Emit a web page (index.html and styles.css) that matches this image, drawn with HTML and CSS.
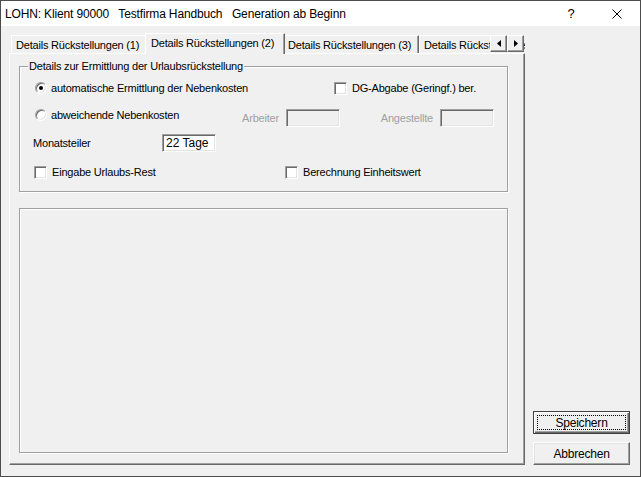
FILE: index.html
```html
<!DOCTYPE html>
<html lang="de">
<head>
<meta charset="utf-8">
<title>LOHN</title>
<link rel="stylesheet" href="styles.css">
</head>
<body>
<div class="window">
  <div class="titlebar">
    <span class="title">LOHN: Klient 90000   Testfirma Handbuch   Generation ab Beginn</span>
    <span class="capbtn help">?</span>
    <span class="capbtn close">
      <svg width="10" height="10" viewBox="0 0 10 10"><path d="M0.5 0.5 L9.5 9.5 M9.5 0.5 L0.5 9.5" stroke="#000" stroke-width="1" fill="none"/></svg>
    </span>
  </div>
  <div class="body">
    <div class="tabctl">
      <div class="tabstrip">
        <div class="tab">Details Rückstellungen (1)</div>
        <div class="tab active">Details Rückstellungen (2)</div>
        <div class="tab">Details Rückstellungen (3)</div>
        <div class="tab">Details Rückstellungen (4)</div>
      </div>
      <div class="scroller">
        <span class="sbtn"><svg width="4" height="7" viewBox="0 0 4 7"><polygon points="4,0 4,7 0,3.5" fill="#000"/></svg></span>
        <span class="sbtn"><svg width="4" height="7" viewBox="0 0 4 7"><polygon points="0,0 0,7 4,3.5" fill="#000"/></svg></span>
      </div>
      <div class="panel">
        <div class="group g1">
          <div class="legend">Details zur Ermittlung der Urlaubsrückstellung</div>
          <div class="row r1">
            <label class="opt w299"><span class="radio checked"></span>automatische Ermittlung der Nebenkosten</label>
            <label class="opt cb"><span class="check"></span>DG-Abgabe (Geringf.) ber.</label>
          </div>
          <div class="row r2">
            <label class="opt w207 up"><span class="radio"></span>abweichende Nebenkosten</label>
            <span class="dis lbl-arb">Arbeiter</span>
            <span class="field disabled f-arb"></span>
            <span class="dis lbl-ang">Angestellte</span>
            <span class="field disabled f-ang"></span>
          </div>
          <div class="row r3">
            <span class="lbl-mon">Monatsteiler</span>
            <span class="field f-mon">22 Tage</span>
          </div>
          <div class="row r4">
            <label class="opt cb w251"><span class="check"></span>Eingabe Urlaubs-Rest</label>
            <label class="opt cb"><span class="check"></span>Berechnung Einheitswert</label>
          </div>
        </div>
        <div class="group g2"></div>
      </div>
    </div>
    <div class="buttons">
      <button class="btn default"><span class="focus">Speichern</span></button>
      <button class="btn">Abbrechen</button>
    </div>
  </div>
</div>
</body>
</html>
```

FILE: styles.css
```css
html, body {
  margin: 0;
  padding: 0;
  background: #f0f0f0;
}

.window {
  width: 641px;
  height: 477px;
  box-sizing: border-box;
  border: 1px solid #4c4c4c;
  background: #f0f0f0;
  display: flex;
  flex-direction: column;
  font-family: "Liberation Sans", Arial, sans-serif;
  font-size: 11px;
  color: #000;
}

/* ---------- title bar ---------- */
.titlebar {
  flex: none;
  height: 25px;
  background: #fff;
  display: flex;
  align-items: center;
}

.title {
  flex: 1;
  padding-left: 4px;
  font-size: 12px;
  letter-spacing: -0.15px;
  white-space: pre;
}

.capbtn {
  width: 46px;
  height: 25px;
  display: flex;
  align-items: center;
  justify-content: center;
}

.help {
  font-size: 13px;
}

/* ---------- body ---------- */
.body {
  flex: 1;
  display: flex;
  padding: 7px 10px 11px 8px;
  letter-spacing: -0.2px;
}

.tabctl {
  width: 516px;
  position: relative;
  display: flex;
  flex-direction: column;
}

.tabstrip {
  flex: none;
  height: 21px;
  display: flex;
  align-items: flex-end;
  padding-left: 2px;
  overflow: hidden;
}

.tab {
  flex: none;
  width: 136px;
  height: 18px;
  box-sizing: border-box;
  margin-bottom: 1px;
  border-top: 1px solid #fff;
  border-left: 1px solid #fff;
  border-right: 1px solid #696969;
  box-shadow: inset -1px 0 #a0a0a0;
  padding: 1px 0 0 4px;
  line-height: 16px;
  white-space: nowrap;
  overflow: hidden;
  background: #f0f0f0;
}

.tab.active {
  width: 140px;
  height: 21px;
  margin: 0 -2px;
  padding-top: 1px;
  padding-left: 5px;
  position: relative;
  z-index: 1;
}

.scroller {
  position: absolute;
  top: 2px;
  left: 481px;
  display: flex;
  z-index: 2;
}

.sbtn {
  width: 17px;
  height: 17px;
  box-sizing: border-box;
  border: 1px solid;
  border-color: #fff #696969 #696969 #fff;
  box-shadow: inset -1px -1px #a0a0a0;
  background: #f0f0f0;
  display: flex;
  align-items: center;
  justify-content: center;
}

.panel {
  margin-top: -1px;
  height: 412px;
  box-sizing: border-box;
  border: 1px solid;
  border-color: #fff #696969 #696969 #fff;
  box-shadow: inset -1px -1px #a0a0a0;
  padding: 12px 0 0 9px;
}

/* ---------- group boxes ---------- */
.group {
  width: 489px;
  box-sizing: border-box;
  border: 1px solid #a0a0a0;
  box-shadow: inset 1px 1px #fff, 1px 1px #fff;
}

.g1 {
  height: 126px;
}

.g2 {
  height: 245px;
  margin-top: 16px;
}

.legend {
  margin: -8px 0 0 8px;
  padding: 0 1px;
  width: max-content;
  height: 15px;
  line-height: 15px;
  background: #f0f0f0;
}

.row {
  display: flex;
  align-items: center;
}

.r1 {
  margin-top: 6px;
  height: 16px;
  padding-left: 15px;
}

.r2 {
  margin-top: 12px;
  height: 20px;
  padding-left: 15px;
}

.r3 {
  margin-top: 6px;
  height: 18px;
  padding-left: 13px;
}

.r4 {
  margin-top: 13px;
  height: 14px;
  padding-left: 14px;
}

.opt {
  display: flex;
  align-items: center;
  gap: 4px;
  white-space: nowrap;
}

.opt.cb {
  gap: 5px;
}

.w299 { width: 299px; }
.w207 { width: 207px; }
.w251 { width: 251px; }

.up {
  align-self: flex-start;
  margin-top: 1px;
}

.radio {
  width: 12px;
  height: 12px;
  box-sizing: border-box;
  border-radius: 50%;
  border: 1px solid;
  border-color: #a0a0a0 #fff #fff #a0a0a0;
  box-shadow: inset 1px 1px #696969, inset -1px -1px #e3e3e3;
  background: #fff;
  display: flex;
  align-items: center;
  justify-content: center;
}

.radio.checked::after {
  content: "";
  width: 4px;
  height: 4px;
  border-radius: 50%;
  background: #000;
}

.check {
  width: 13px;
  height: 13px;
  box-sizing: border-box;
  border: 1px solid;
  border-color: #a0a0a0 #fff #fff #a0a0a0;
  box-shadow: inset 1px 1px #696969, inset -1px -1px #e3e3e3;
  background: #fff;
}

.dis {
  color: #a0a0a0;
  white-space: nowrap;
}

.lbl-arb {
  width: 37px;
  text-align: right;
}

.lbl-ang {
  width: 53px;
  margin-left: 40px;
  text-align: right;
}

.field {
  width: 54px;
  height: 18px;
  box-sizing: border-box;
  border: 1px solid;
  border-color: #a0a0a0 #fff #fff #a0a0a0;
  box-shadow: inset 1px 1px #696969, inset -1px -1px #e3e3e3;
  background: #fff;
  line-height: 16px;
  padding-left: 3px;
  font-size: 12px;
  letter-spacing: 0;
}

.field.disabled {
  background: #f0f0f0;
}

.f-arb,
.f-ang {
  margin-left: 7px;
}

.lbl-mon {
  width: 129px;
}

/* ---------- buttons ---------- */
.buttons {
  margin-left: 8px;
  width: 97px;
  display: flex;
  flex-direction: column;
  justify-content: flex-end;
  gap: 8px;
}

.btn {
  height: 23px;
  width: 97px;
  box-sizing: border-box;
  margin: 0;
  padding: 0;
  font: inherit;
  font-size: 12px;
  letter-spacing: -0.2px;
  color: #000;
  background: #f0f0f0;
  border: 1px solid;
  border-color: #fff #696969 #696969 #fff;
  box-shadow: inset -1px -1px #a0a0a0, inset 1px 1px #e3e3e3;
  display: flex;
  align-items: center;
  justify-content: center;
}

.btn.default {
  border: 1px solid #404040;
  box-shadow: inset 1px 1px #fff, inset -1px -1px #696969, inset -2px -2px #a0a0a0;
  padding: 3px;
}

.focus {
  flex: 1;
  align-self: stretch;
  border: 1px dotted #000;
  display: flex;
  align-items: center;
  justify-content: center;
}
```
